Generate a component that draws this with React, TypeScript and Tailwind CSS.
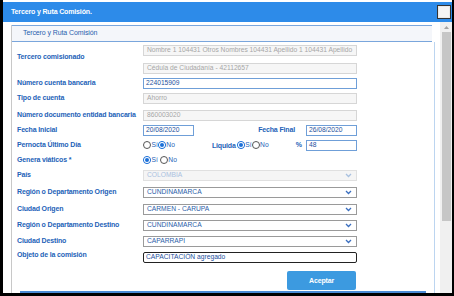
const font = { fontFamily: '"Liberation Sans", Arial, sans-serif' }

const Label = ({ children, up }: { children: React.ReactNode; up?: boolean }) => (
  <div className={`w-[126px] shrink-0 text-[7px] font-bold tracking-[-0.15px] text-[#2462b8] leading-none ${up ? "-mt-[5px]" : "-mt-[2px]"}`}>
    {children}
  </div>
)

const Disabled = ({ value, w = "w-[214px]" }: { value: string; w?: string }) => (
  <div className={`${w} h-[11px] border border-[#d6d6d6] bg-[#f6f6f6] px-[3px] flex items-center text-[6.7px] text-[#a6a6a6] leading-none whitespace-nowrap overflow-hidden`}>
    {value}
  </div>
)

const Input = ({ value, w = "w-[214px]" }: { value: string; w?: string }) => (
  <div className={`${w} h-[11px] border border-[#6f9fd8] bg-white px-[2px] flex items-center text-[6.7px] text-[#1d4f9c] leading-none whitespace-nowrap`}>
    {value}
  </div>
)

const Select = ({ value, disabled }: { value: string; disabled?: boolean }) => (
  <div
    className={`w-[214px] h-[11px] border px-[3px] flex items-center justify-between text-[6.7px] leading-none ${
      disabled ? "border-[#e0e0e0] bg-[#f5f5f5] text-[#a9c1e0]" : "border-[#9a9a9a] bg-white text-[#2b5ea8]"
    }`}
  >
    <span>{value}</span>
    <svg width="7" height="5" viewBox="0 0 7 5" className="mr-[1px]">
      <path d="M1 1 L3.5 3.5 L6 1" fill="none" stroke={disabled ? "#a9c1e0" : "#3b6fc0"} strokeWidth="1.3" />
    </svg>
  </div>
)

const Radio = ({ on }: { on?: boolean }) =>
  on ? (
    <span className="w-[8px] h-[8px] rounded-full bg-[#1a6fd8] border border-[#1a6fd8] flex items-center justify-center">
      <span className="w-[4px] h-[4px] rounded-full bg-[#1a6fd8] ring-1 ring-white" />
    </span>
  ) : (
    <span className="w-[8px] h-[8px] rounded-full border border-[#555] bg-white" />
  )

const Opt = ({ on, text }: { on?: boolean; text: string }) => (
  <span className="flex items-center gap-[0.5px]">
    <Radio on={on} />
    <span className="text-[6.7px] text-[#2462b8] leading-none">{text}</span>
  </span>
)

const Row = ({ h, label, up, children }: { h: string; label: React.ReactNode; up?: boolean; children: React.ReactNode }) => (
  <div className={`flex items-center ${h}`}>
    <Label up={up}>{label}</Label>
    {children}
  </div>
)

export default function App() {
  return (
    <div style={font} className="w-[454px] h-[296px] overflow-hidden bg-black pl-[3px] pr-[2px] pb-[3px]">
      <div className="h-full bg-white pt-[2px] flex flex-col">
        {/* title bar */}
        <div className="h-[20px] shrink-0 bg-[#2d8be9] flex items-center justify-between pl-[8px] pr-[1px]">
          <span className="text-[7px] font-bold tracking-[-0.15px] text-white">Tercero y Ruta Comisión.</span>
          <div className="w-[14px] h-[14px] border border-[#333] bg-[#e9e9e9] p-[1px]">
            <div className="w-full h-full bg-[#f4f4f4]" />
          </div>
        </div>

        <div className="flex flex-1 min-h-0">
          {/* scroll area */}
          <div className="w-[437px] pt-[3px] pl-[8px] flex">
            <div className="w-[424px] border-l border-[#c8c8c8] flex flex-col">
              <div className="w-[420px] h-[17px] shrink-0 border-y border-[#7aa6dc] bg-[#f4f6fa] pl-[11px] flex items-center text-[7px] tracking-[-0.1px] text-[#2a5fae]">
                Tercero y Ruta Comisión
              </div>
              <div className="flex-1 border-r border-[#bcd5f0] pl-[5px] flex flex-col">
                <Row h="h-[34px]" label="Tercero comisionado" up>
                  <div className="flex flex-col gap-[7px]">
                    <Disabled value="Nombre 1 104431 Otros Nombres 104431 Apellido 1 104431 Apellido" />
                    <Disabled value="Cédula de Ciudadanía  -  42112657" />
                  </div>
                </Row>
                <Row h="h-[14px]" label="Número cuenta bancaria">
                  <Input value="224015909" />
                </Row>
                <Row h="h-[17px]" label="Tipo de cuenta">
                  <Disabled value="Ahorro" />
                </Row>
                <Row h="h-[16px]" label="Número documento entidad bancaria">
                  <Disabled value="860003020" />
                </Row>
                <Row h="h-[14px]" label="Fecha Inicial">
                  <div className="w-[214px] flex items-center">
                    <Input value="20/08/2020" w="w-[51px]" />
                    <span className="ml-auto mr-[11px] -mt-[2px] text-[7px] font-bold tracking-[-0.15px] text-[#2462b8] leading-none">Fecha Final</span>
                    <Input value="26/08/2020" w="w-[51px]" />
                  </div>
                </Row>
                <Row h="h-[16px]" label="Pernocta Último Día">
                  <div className="w-[214px] flex items-center">
                    <Opt text="Sí" />
                    <Opt on text="No" />
                    <span className="ml-[37px] mr-[1px] text-[7px] font-bold tracking-[-0.15px] text-[#2462b8] leading-none">Liquida</span>
                    <Opt on text="Sí" />
                    <Opt text="No" />
                    <span className="ml-auto mr-[4px] -mt-[2px] text-[7px] font-bold text-[#2462b8] leading-none">%</span>
                    <Input value="48" w="w-[51px]" />
                  </div>
                </Row>
                <Row h="h-[14px]" label="Genera viáticos *">
                  <div className="flex items-center gap-[2px]">
                    <Opt on text="Sí" />
                    <Opt text="No" />
                  </div>
                </Row>
                <Row h="h-[17px]" label="País">
                  <Select value="COLOMBIA" disabled />
                </Row>
                <Row h="h-[17px]" label="Región o Departamento Origen">
                  <Select value="CUNDINAMARCA" />
                </Row>
                <Row h="h-[16px]" label="Ciudad Origen">
                  <Select value="CARMEN - CARUPA" />
                </Row>
                <Row h="h-[16px]" label="Región o Departamento Destino">
                  <Select value="CUNDINAMARCA" />
                </Row>
                <Row h="h-[16px]" label="Ciudad Destino">
                  <Select value="CAPARRAPI" />
                </Row>
                <Row h="h-[16px]" label="Objeto de la comisión" up>
                  <div className="w-[214px] h-[11px] border border-[#222] rounded-[2px] bg-white px-[2px] flex items-center text-[6.7px] text-[#1d4f9c] leading-none">
                    CAPACITACIÓN agregado
                  </div>
                </Row>
                <div className="mt-[6px] pl-[270px] flex">
                  <button className="w-[69px] h-[19px] rounded-[2px] bg-[#3c9ae0] text-white text-[7px] font-bold tracking-[-0.15px] leading-none">
                    Aceptar
                  </button>
                </div>
                <div className="ml-[3px] mt-[1px] w-[406px] h-[2px] bg-[#4a8ad4]" />
              </div>
            </div>
          </div>
          {/* scrollbar */}
          <div className="w-[12px] bg-[#f0f0f0] flex flex-col items-center pt-[4px]">
            <svg width="5" height="3" viewBox="0 0 5 3">
              <path d="M0 3 L2.5 0 L5 3 Z" fill="#a3a3a3" />
            </svg>
            <div className="mt-[3px] w-[9px] h-[189px] bg-[#c6c6c6]" />
          </div>
        </div>
      </div>
    </div>
  )
}
